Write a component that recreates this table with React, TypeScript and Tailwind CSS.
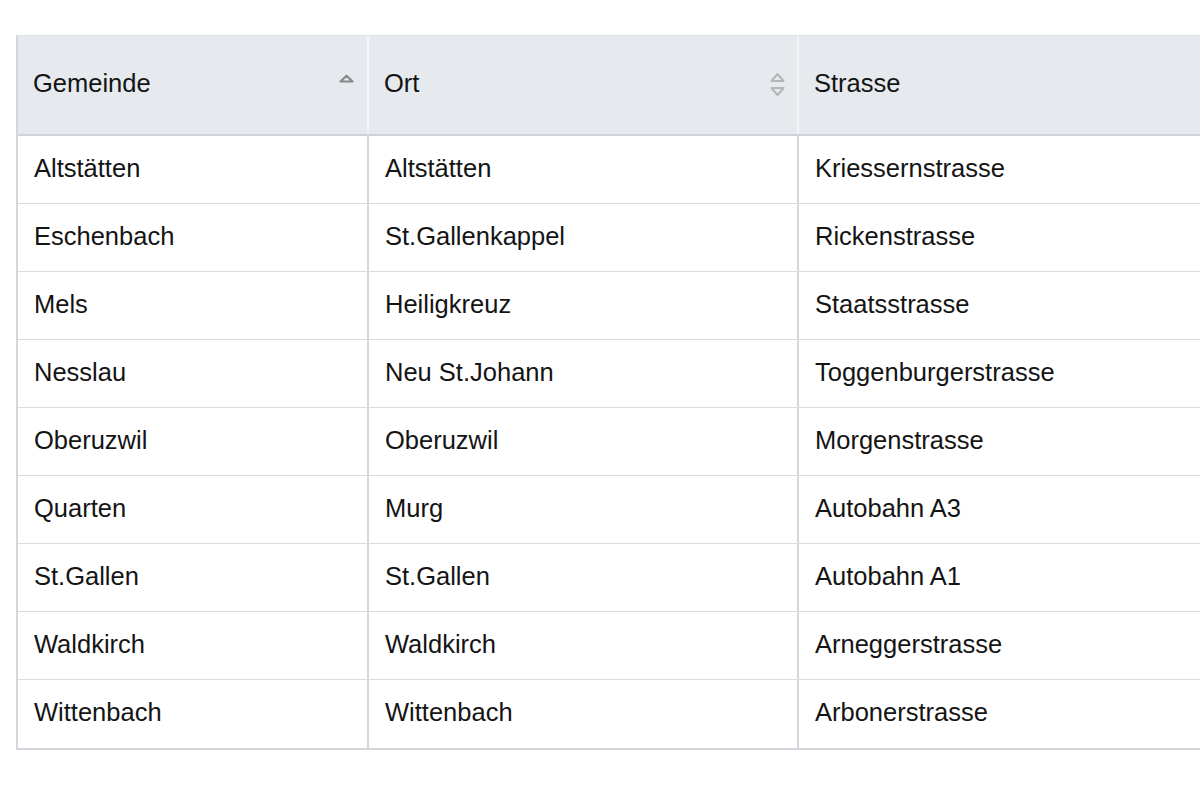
import React from "react";

const rows: [string, string, string][] = [
  ["Altstätten", "Altstätten", "Kriessernstrasse"],
  ["Eschenbach", "St.Gallenkappel", "Rickenstrasse"],
  ["Mels", "Heiligkreuz", "Staatsstrasse"],
  ["Nesslau", "Neu St.Johann", "Toggenburgerstrasse"],
  ["Oberuzwil", "Oberuzwil", "Morgenstrasse"],
  ["Quarten", "Murg", "Autobahn A3"],
  ["St.Gallen", "St.Gallen", "Autobahn A1"],
  ["Waldkirch", "Waldkirch", "Arneggerstrasse"],
  ["Wittenbach", "Wittenbach", "Arbonerstrasse"],
];

function SortUp() {
  return (
    <svg width="17" height="9" viewBox="0 0 17 9" className="shrink-0">
      <path d="M2.5 7.5 L8.5 1.8 L14.5 7.5 Z" fill="none" stroke="#88898b" strokeWidth="2.2" strokeLinejoin="round" />
    </svg>
  );
}

function SortBoth() {
  return (
    <svg width="17" height="25" viewBox="0 0 17 25" className="shrink-0">
      <path d="M2.5 9 L8.5 2 L14.5 9 Z" fill="none" stroke="#b3b5b8" strokeWidth="2" strokeLinejoin="round" />
      <path d="M2.5 16 L8.5 23 L14.5 16 Z" fill="none" stroke="#b3b5b8" strokeWidth="2" strokeLinejoin="round" />
    </svg>
  );
}

export default function App() {
  return (
    <div
      className="w-[1200px] h-[800px] overflow-hidden bg-white pt-[35px] pl-[16px] text-[#141414]"
      style={{ fontFamily: '"Liberation Sans", Arial, Helvetica, sans-serif' }}
    >
      <div className="w-[1400px] border-l-2 border-t border-b-2 border-l-[#d3d6db] border-t-[#dfe2e6] border-b-[#d3d6db] text-[25.5px]">
        <div className="flex h-[100px] bg-[#e6e9ed] border-b-2 border-[#cfd3d8]">
          <div className="w-[351px] flex items-start justify-between pt-[28px] pl-[15px] pr-[12px] border-r-2 border-[#f3f4f6]">
            <span>Gemeinde</span>
            <span className="mt-[10px]"><SortUp /></span>
          </div>
          <div className="w-[430px] flex items-start justify-between pt-[28px] pl-[15px] pr-[11px] border-r-2 border-[#f3f4f6]">
            <span>Ort</span>
            <span className="mt-[8px]"><SortBoth /></span>
          </div>
          <div className="flex-1 flex items-start pt-[28px] pl-[15px]">
            <span>Strasse</span>
          </div>
        </div>
        {rows.map((r, i) => (
          <div
            key={i}
            className={`flex h-[68px] ${i < rows.length - 1 ? "border-b border-[#d9dce0]" : ""}`}
          >
            <div className="w-[351px] flex items-center pl-[16px] pb-[3px] border-r-2 border-[#d3d6db]">{r[0]}</div>
            <div className="w-[430px] flex items-center pl-[16px] pb-[3px] border-r-2 border-[#d3d6db]">{r[1]}</div>
            <div className="flex-1 flex items-center pl-[16px] pb-[3px]">{r[2]}</div>
          </div>
        ))}
      </div>
    </div>
  );
}
